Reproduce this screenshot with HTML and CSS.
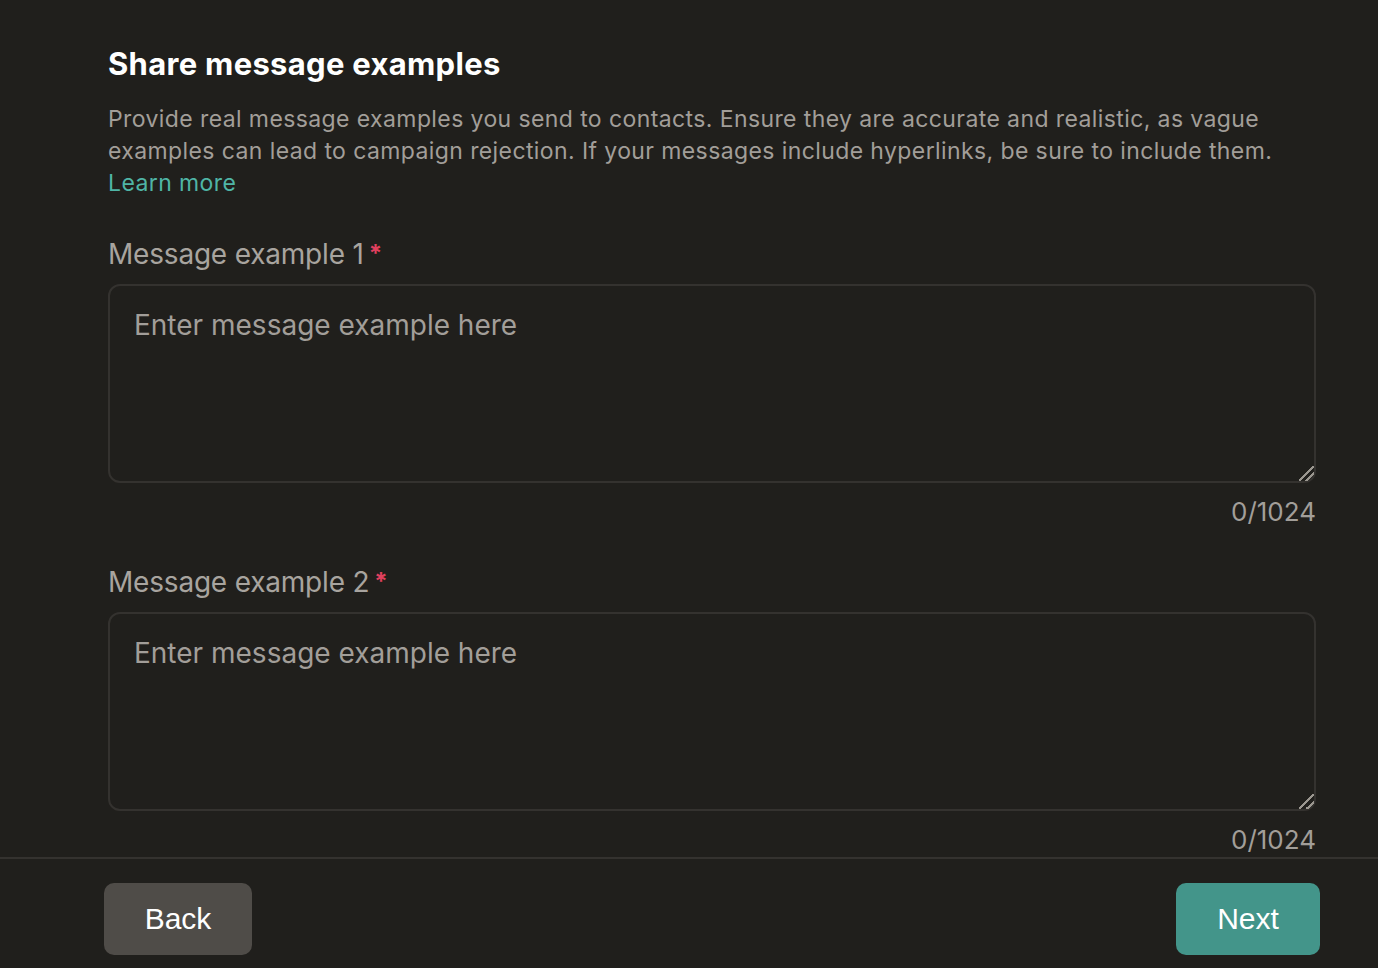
FILE: index.html
```html
<!DOCTYPE html>
<html lang="en">
<head>
<meta charset="utf-8">
<title>Share message examples</title>
<link rel="stylesheet" href="styles.css">
</head>
<body>
<div class="page">
  <main class="content">
    <h1 class="title">Share message examples</h1>
    <p class="desc">Provide real message examples you send to contacts. Ensure they are accurate and realistic, as vague examples can lead to campaign rejection. If your messages include hyperlinks, be sure to include them. <a class="link" href="#">Learn more</a></p>

    <div class="field">
      <label class="label">Message example 1<span class="req">*</span></label>
      <textarea class="input" placeholder="Enter message example here"></textarea>
      <div class="counter">0/1024</div>
    </div>

    <div class="field">
      <label class="label">Message example 2<span class="req">*</span></label>
      <textarea class="input" placeholder="Enter message example here"></textarea>
      <div class="counter">0/1024</div>
    </div>
  </main>
  <footer class="footer">
    <button class="btn btn-back">Back</button>
    <button class="btn btn-next">Next</button>
  </footer>
</div>
</body>
</html>
```
FILE: styles.css
```css
* { box-sizing: border-box; }
html, body { margin: 0; padding: 0; }
body {
  background: #201f1c;
  font-family: "Inter", "Noto Sans", sans-serif;
  color: #a29e99;
}
.page {
  height: 968px;
  display: flex;
  flex-direction: column;
  overflow: hidden;
}
.content {
  flex: 1;
  overflow: hidden;
  padding: 42px 62px 0 108px;
}
.title {
  margin: 0;
  font-size: 31px;
  line-height: 44px;
  font-weight: 700;
  color: #ffffff;
  letter-spacing: 0.3px;
}
.desc {
  margin: 17px 0 0;
  font-size: 23px;
  line-height: 32px;
  color: #a29e99;
  letter-spacing: 0.4px;
}
.link {
  display: block;
  width: max-content;
  color: #4fb5a6;
  text-decoration: none;
}
.field {
  display: flex;
  flex-direction: column;
  margin-top: 37px;
}
.field + .field { margin-top: 34px; }
.label {
  font-size: 28px;
  line-height: 36px;
  color: #a8a49f;
  display: flex;
  align-items: flex-start;
  gap: 5px;
  letter-spacing: -0.2px;
}
.req {
  color: #e0405e;
  font-size: 24px;
  line-height: 36px;
  font-weight: 700;
}
.input {
  color-scheme: dark;
  margin-top: 12px;
  height: 199px;
  width: 100%;
  background: #201f1c;
  border: 2px solid #34322f;
  border-radius: 12px;
  padding: 20px 24px;
  font-family: inherit;
  font-size: 28px;
  line-height: 38px;
  color: #e0dcd7;
  resize: vertical;
  outline: none;
  letter-spacing: 0px;
}
.input::placeholder { color: #a29e99; }
.input::-webkit-resizer {
  background: linear-gradient(135deg,
    transparent 0%, transparent 46%,
    #9a968f 46%, #9a968f 56%,
    transparent 56%, transparent 70%,
    #9a968f 70%, #9a968f 80%,
    transparent 80%);
}
.counter {
  text-align: right;
  font-size: 26px;
  line-height: 36px;
  margin-top: 11px;
  color: #a29e99;
}
.footer {
  flex: 0 0 111px;
  border-top: 2px solid #34322f;
  display: flex;
  justify-content: space-between;
  align-items: flex-start;
  padding: 24px 58px 0 104px;
  background: #201f1c;
}
.btn {
  height: 72px;
  border: none;
  border-radius: 10px;
  font-family: "Liberation Sans", Arial, sans-serif;
  font-size: 30px;
  color: #ffffff;
  cursor: pointer;
}
.btn-back {
  width: 148px;
  background: #4f4c48;
}
.btn-next {
  width: 144px;
  background: #43958a;
}
```
